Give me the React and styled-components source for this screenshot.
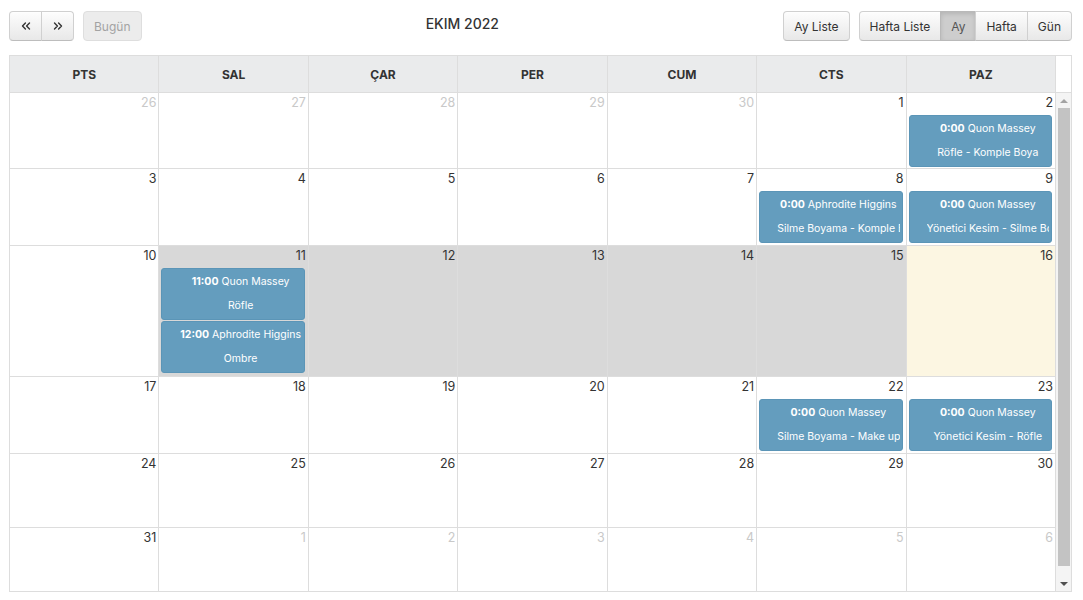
import styled, { createGlobalStyle, css } from "styled-components";
import { ChevronsLeft, ChevronsRight } from "lucide-react";

const GlobalStyle = createGlobalStyle`
  html, body {
    margin: 0;
    padding: 0;
    background: #fff;
  }
  body {
    font-family: Inter, "Noto Sans", sans-serif;
    color: #333;
  }
  * { box-sizing: border-box; }
`;

const Page = styled.div`
  padding: 11px 11px 0 9px;
`;

const Toolbar = styled.div`
  display: flex;
  align-items: flex-start;
  height: 44px;
`;

const Group = styled.div`
  display: flex;
  gap: ${p => p.$gap || 0}px;
`;

const Title = styled.h2`
  flex: 1;
  margin: 4px 0 0;
  text-align: center;
  font-size: 14px;
  line-height: 17px;
  font-weight: 500;
  color: #333;
`;

const Button = styled.button`
  height: 30px;
  padding: 0 10px;
  display: flex;
  align-items: center;
  justify-content: center;
  font-family: inherit;
  font-size: 12px;
  color: #333;
  background: linear-gradient(#fdfdfd, #e8e8e8);
  border: 1px solid #d0d0d0;
  border-bottom-color: #bdbdbd;
  border-radius: 4px;
  box-shadow: inset 0 1px 0 rgba(255, 255, 255, 0.6);
  ${p => p.$icon && css`
    width: 33px;
    padding: 0;
  `}
  ${p => p.$joined && css`
    border-radius: 0;
    margin-left: -1px;
    &:first-child { border-radius: 4px 0 0 4px; margin-left: 0; }
    &:last-child { border-radius: 0 4px 4px 0; }
  `}
  ${p => p.$active && css`
    background: #cdcdcd;
    border-color: #b9b9b9;
    box-shadow: inset 0 2px 4px rgba(0, 0, 0, 0.12);
    color: #555;
  `}
  ${p => p.disabled && css`
    background: #ececec;
    color: #a3a3a3;
    border-color: #dedede;
    box-shadow: none;
  `}
`;

const Calendar = styled.div`
  width: 1063px;
  border: 1px solid #ddd;
`;

const HeadRow = styled.div`
  display: grid;
  grid-template-columns: repeat(7, 1fr) 15px;
  height: 37px;
  border-bottom: 1px solid #ddd;
`;

const HeadCell = styled.div`
  display: flex;
  align-items: center;
  justify-content: center;
  background: ${p => (p.$gutter ? "#fff" : "#eaebec")};
  border-right: ${p => (p.$gutter ? "none" : "1px solid #ddd")};
  font-size: 12px;
  font-weight: 700;
  color: #333;
`;

const Body = styled.div`
  display: flex;
  height: 498px;
  overflow: hidden;
`;

const Weeks = styled.div`
  flex: 1;
  min-width: 0;
`;

const ScrollBar = styled.div`
  width: 15px;
  flex: none;
  display: flex;
  flex-direction: column;
  background: #f4f4f4;
`;

const ScrollArrow = styled.div`
  height: 15px;
  flex: none;
  display: flex;
  align-items: center;
  justify-content: center;
  &::after {
    content: "";
    border-left: 4px solid transparent;
    border-right: 4px solid transparent;
    ${p => (p.$down
      ? "border-top: 4px solid #505050;"
      : "border-bottom: 4px solid #a3a3a3;")}
  }
`;

const ScrollTrack = styled.div`
  flex: 1;
  padding: 0 1px 0 2px;
`;

const ScrollThumb = styled.div`
  height: 458px;
  background: #c3c3c3;
`;

const Week = styled.div`
  display: grid;
  grid-template-columns: repeat(7, 1fr);
  height: ${p => p.$h}px;
  border-bottom: 1px solid #ddd;
`;

const Day = styled.div`
  min-width: 0;
  border-right: 1px solid #ddd;
  background: ${p => p.$bg || "#fff"};
  overflow: hidden;
`;

const DayNum = styled.div`
  height: 22px;
  padding: 2px 2px 0 0;
  text-align: right;
  font-size: 12.5px;
  line-height: 16px;
  color: ${p => (p.$muted ? "#c9c9c9" : "#333")};
`;

const Event = styled.div`
  margin: 0 3px 1px 2px;
  padding: 1px 2px 1px 17px;
  background: #649dbe;
  border: 1px solid #5b95b7;
  border-radius: 3px;
  color: #fff;
  font-size: 10.5px;
  text-align: center;
  white-space: nowrap;
  overflow: hidden;
`;

const EventLine = styled.div`
  height: 24px;
  line-height: 24px;
  overflow: hidden;
  b { font-weight: 700; }
`;

const events = {
  "10-2": [{ time: "0:00", who: "Quon Massey", what: "Röfle - Komple Boya" }],
  "10-8": [{ time: "0:00", who: "Aphrodite Higgins", what: "Silme Boyama - Komple Boya" }],
  "10-9": [{ time: "0:00", who: "Quon Massey", what: "Yönetici Kesim - Silme Boyama" }],
  "10-11": [
    { time: "11:00", who: "Quon Massey", what: "Röfle" },
    { time: "12:00", who: "Aphrodite Higgins", what: "Ombre" },
  ],
  "10-22": [{ time: "0:00", who: "Quon Massey", what: "Silme Boyama - Make up" }],
  "10-23": [{ time: "0:00", who: "Quon Massey", what: "Yönetici Kesim - Röfle" }],
};

const dayNames = ["PTS", "SAL", "ÇAR", "PER", "CUM", "CTS", "PAZ"];
const rowHeights = [76, 77, 131, 77, 74, 74];

const weeks = (() => {
  const out = [];
  let day = 26;
  let month = 9;
  for (let w = 0; w < 6; w++) {
    const row = [];
    for (let d = 0; d < 7; d++) {
      row.push({ day, month });
      day++;
      if (month === 9 && day > 30) { day = 1; month = 10; }
      else if (month === 10 && day > 31) { day = 1; month = 11; }
    }
    out.push(row);
  }
  return out;
})();

const cellBg = (month, day) => {
  if (month !== 10) return null;
  if (day === 16) return "#fcf6e2";
  if (day >= 11 && day <= 15) return "#d8d8d8";
  return null;
};

export default function App() {
  return (
    <Page>
      <GlobalStyle />
      <Toolbar>
        <Group $gap={9}>
          <Group>
            <Button $joined $icon><ChevronsLeft size={14} strokeWidth={2.4} /></Button>
            <Button $joined $icon><ChevronsRight size={14} strokeWidth={2.4} /></Button>
          </Group>
          <Button disabled>Bugün</Button>
        </Group>
        <Title>EKIM 2022</Title>
        <Group $gap={9}>
          <Button>Ay Liste</Button>
          <Group>
            <Button $joined>Hafta Liste</Button>
            <Button $joined $active>Ay</Button>
            <Button $joined>Hafta</Button>
            <Button $joined>Gün</Button>
          </Group>
        </Group>
      </Toolbar>
      <Calendar>
        <HeadRow>
          {dayNames.map(n => <HeadCell key={n}>{n}</HeadCell>)}
          <HeadCell $gutter />
        </HeadRow>
        <Body>
          <Weeks>
            {weeks.map((row, i) => (
              <Week key={i} $h={rowHeights[i]}>
                {row.map(({ day, month }) => (
                  <Day key={`${month}-${day}`} $bg={cellBg(month, day)}>
                    <DayNum $muted={month !== 10}>{day}</DayNum>
                    {(events[`${month}-${day}`] || []).map((e, k) => (
                      <Event key={k}>
                        <EventLine><b>{e.time}</b> {e.who}</EventLine>
                        <EventLine>{e.what}</EventLine>
                      </Event>
                    ))}
                  </Day>
                ))}
              </Week>
            ))}
          </Weeks>
          <ScrollBar>
            <ScrollArrow />
            <ScrollTrack>
              <ScrollThumb />
            </ScrollTrack>
            <ScrollArrow $down />
          </ScrollBar>
        </Body>
      </Calendar>
    </Page>
  );
}
